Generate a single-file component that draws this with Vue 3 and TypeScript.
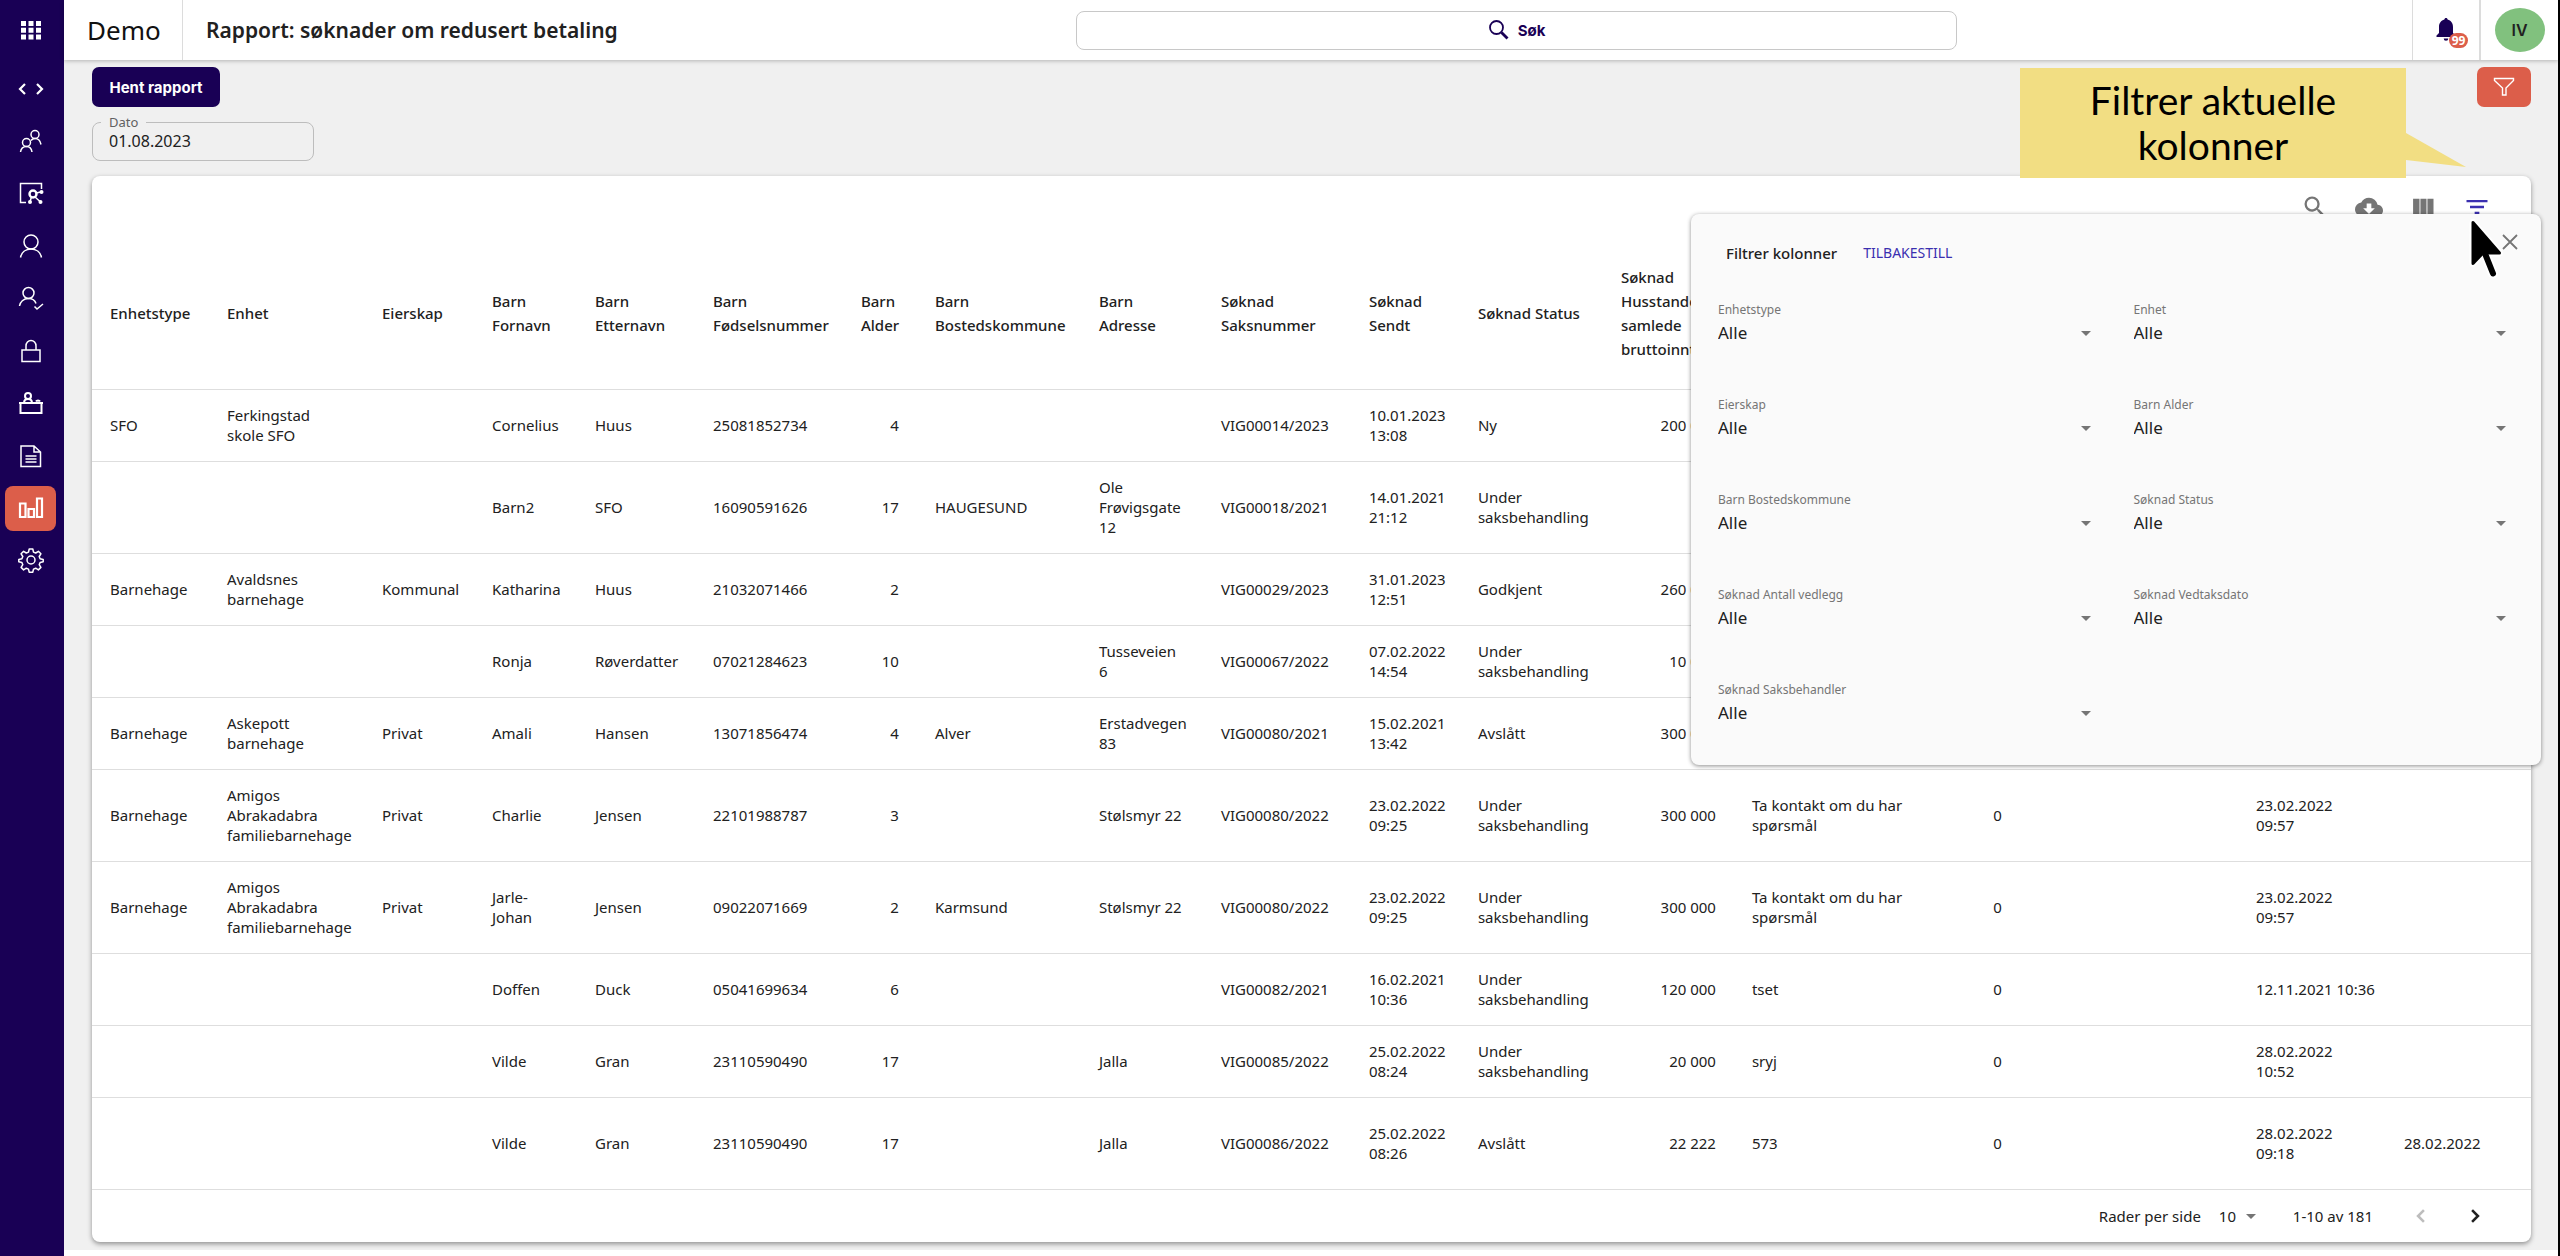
<script setup lang="ts">
import { ref } from 'vue'

interface Column {
  title: string
  width: number
  right?: boolean
}

const columns: Column[] = [
  { title: 'Enhetstype', width: 117 },
  { title: 'Enhet', width: 155 },
  { title: 'Eierskap', width: 110 },
  { title: 'Barn\nFornavn', width: 103 },
  { title: 'Barn\nEtternavn', width: 118 },
  { title: 'Barn\nFødselsnummer', width: 148 },
  { title: 'Barn\nAlder', width: 74, right: true },
  { title: 'Barn\nBostedskommune', width: 164 },
  { title: 'Barn\nAdresse', width: 122 },
  { title: 'Søknad\nSaksnummer', width: 148 },
  { title: 'Søknad\nSendt', width: 109 },
  { title: 'Søknad Status', width: 143 },
  { title: 'Søknad\nHusstandens\nsamlede\nbruttoinntekt', width: 131, right: true },
  { title: '', width: 186 },
  { title: '', width: 100, right: true },
  { title: '', width: 218 },
  { title: '', width: 148 },
  { title: '', width: 145 },
]
const totalWidth = columns.reduce((sum, c) => sum + c.width, 0)
const share = (c: Column) => ({ width: `${(c.width / totalWidth) * 100}%` })

const under = 'Under\nsaksbehandling'
const amigos = 'Amigos\nAbrakadabra\nfamiliebarnehage'
const kontakt = 'Ta kontakt om du har\nspørsmål'

const rows: { tall?: boolean; cells: string[] }[] = [
  { cells: ['SFO', 'Ferkingstad\nskole SFO', '', 'Cornelius', 'Huus', '25081852734', '4', '', '', 'VIG00014/2023', '10.01.2023\n13:08', 'Ny', '200 000', '', '', '', '', ''] },
  { tall: true, cells: ['', '', '', 'Barn2', 'SFO', '16090591626', '17', 'HAUGESUND', 'Ole\nFrøvigsgate\n12', 'VIG00018/2021', '14.01.2021\n21:12', under, '', '', '', '', '', ''] },
  { cells: ['Barnehage', 'Avaldsnes\nbarnehage', 'Kommunal', 'Katharina', 'Huus', '21032071466', '2', '', '', 'VIG00029/2023', '31.01.2023\n12:51', 'Godkjent', '260 000', '', '', '', '', ''] },
  { cells: ['', '', '', 'Ronja', 'Røverdatter', '07021284623', '10', '', 'Tusseveien\n6', 'VIG00067/2022', '07.02.2022\n14:54', under, '10 000', '', '', '', '', ''] },
  { cells: ['Barnehage', 'Askepott\nbarnehage', 'Privat', 'Amali', 'Hansen', '13071856474', '4', 'Alver', 'Erstadvegen\n83', 'VIG00080/2021', '15.02.2021\n13:42', 'Avslått', '300 000', '', '', '', '', ''] },
  { tall: true, cells: ['Barnehage', amigos, 'Privat', 'Charlie', 'Jensen', '22101988787', '3', '', 'Stølsmyr 22', 'VIG00080/2022', '23.02.2022\n09:25', under, '300 000', kontakt, '0', '', '23.02.2022\n09:57', ''] },
  { tall: true, cells: ['Barnehage', amigos, 'Privat', 'Jarle-\nJohan', 'Jensen', '09022071669', '2', 'Karmsund', 'Stølsmyr 22', 'VIG00080/2022', '23.02.2022\n09:25', under, '300 000', kontakt, '0', '', '23.02.2022\n09:57', ''] },
  { cells: ['', '', '', 'Doffen', 'Duck', '05041699634', '6', '', '', 'VIG00082/2021', '16.02.2021\n10:36', under, '120 000', 'tset', '0', '', '12.11.2021 10:36', ''] },
  { cells: ['', '', '', 'Vilde', 'Gran', '23110590490', '17', '', 'Jalla', 'VIG00085/2022', '25.02.2022\n08:24', under, '20 000', 'sryj', '0', '', '28.02.2022\n10:52', ''] },
  { tall: true, cells: ['', '', '', 'Vilde', 'Gran', '23110590490', '17', '', 'Jalla', 'VIG00086/2022', '25.02.2022\n08:26', 'Avslått', '22 222', '573', '0', '', '28.02.2022\n09:18', '28.02.2022'] },
]

const filters = [
  'Enhetstype', 'Enhet', 'Eierskap', 'Barn Alder', 'Barn Bostedskommune',
  'Søknad Status', 'Søknad Antall vedlegg', 'Søknad Vedtaksdato', 'Søknad Saksbehandler',
]

const dato = ref('01.08.2023')
</script>

<template>
  <div class="app">
    <nav class="side" aria-label="Hovedmeny">
      <a href="#" aria-label="Apper">
        <svg width="22" height="22" viewBox="0 0 22 22" fill="#fff">
          <path d="M1 2h5v5H1zM8.500 2h5v5h-5zM16 2h5v5h-5zM1 8.700h5v5H1zM8.500 8.700h5v5h-5zM16 8.700h5v5h-5zM1 15.400h5v5H1zM8.500 15.400h5v5h-5zM16 15.400h5v5h-5z" />
        </svg>
      </a>
      <div class="menu">
        <a href="#" aria-label="Utvikler">
          <svg class="ln bold" viewBox="0 0 26 26"><path d="M7 8l-5 5 5 5M19 8l5 5-5 5" /></svg>
        </a>
        <a href="#" aria-label="Familier">
          <svg class="ln" viewBox="0 0 26 26">
            <circle cx="17" cy="6.500" r="4" /><path d="M13 12.500c1-1.500 2.300-2 4-2 3.200 0 5.300 2.300 6 6" />
            <circle cx="8.500" cy="14.500" r="4" /><path d="M2.500 24c.5-3.500 3-5.500 6-5.500s5 2 5.500 5.500" />
          </svg>
        </a>
        <a href="#" aria-label="Nettverk">
          <svg class="ln" viewBox="0 0 26 26">
            <path d="M8 22.500H2.500v-19h21V9" />
            <circle cx="15" cy="14" r="3.500" stroke-width="2.400" />
            <path d="M18 13l5-1M13.500 17l-1.500 4.500M17 17l5 4.500" />
            <g fill="#fff" stroke="none"><circle cx="23.500" cy="12" r="2" /><circle cx="12" cy="22" r="2" /><circle cx="22.500" cy="22" r="2" /></g>
          </svg>
        </a>
        <a href="#" aria-label="Personer">
          <svg class="ln" viewBox="0 0 26 26"><circle cx="13" cy="9" r="7" /><path d="M2.500 24.500C3.500 19.500 7.500 16 13 16s9.500 3.500 10.500 8.500" /></svg>
        </a>
        <a href="#" aria-label="Godkjenning">
          <svg class="ln" viewBox="0 0 26 26"><circle cx="10.500" cy="8" r="5.500" /><path d="M1.500 21c.5-4 4-7.500 9-7.500 4 0 6.500 2 7.500 5M16.500 21.500l2.500 2.500 6-5" /></svg>
        </a>
        <a href="#" aria-label="Tilgang">
          <svg class="ln" viewBox="0 0 26 26"><path d="M4 12h18v11.500H4zM8 12V8a5 5.500 0 0 1 10 0v4" /></svg>
        </a>
        <a href="#" aria-label="Saksbehandling">
          <svg class="ln" viewBox="0 0 26 26"><g stroke-width="2"><circle cx="10" cy="6" r="3" /><path d="M6 12c.3-2 2-3 4-3s3.700 1 4 3M18 11.500c.8-1.500 3.200-1.500 4 0M1 13h24M2.500 13v10h21V13" /></g></svg>
        </a>
        <a href="#" aria-label="Dokumenter">
          <svg class="ln" viewBox="0 0 26 26"><path d="M3 3h13l6.500 6v14.500H3zM16 3v6h6.500M7.500 13h11M7.500 16h11M7.500 19h11" /></svg>
        </a>
        <a href="#" class="active" aria-label="Rapporter" aria-current="page">
          <svg class="ln bold" viewBox="0 0 26 26"><path d="M2 8.500h5.500V22H2zM10.500 14H16v8h-5.500zM19 3.500h5V22h-5z" /></svg>
        </a>
        <a href="#" aria-label="Innstillinger">
          <svg class="ln" viewBox="0 0 26 26">
            <circle cx="13" cy="13" r="4" />
            <path d="M11.200 2h3.600l.7 3.100 2.200.9 2.700-1.700 2.500 2.500-1.700 2.700.9 2.200 3.100.7v2.400l-3.100.7-.9 2.200 1.700 2.700-2.500 2.500-2.700-1.700-2.200.9-.7 3.100h-3.600l-.7-3.100-2.200-.9-2.700 1.700-2.500-2.500 1.700-2.700-.9-2.200-3.100-.7v-2.400l3.100-.7.9-2.200-1.700-2.700 2.500-2.500L8.300 6l2.200-.9z" stroke-linejoin="round" />
          </svg>
        </a>
      </div>
    </nav>

    <div class="page">
      <header class="top">
        <div class="brand">Demo</div>
        <h1>Rapport: søknader om redusert betaling</h1>
        <button type="button" class="search">
          <svg width="22" height="22" viewBox="0 0 22 22" fill="none" stroke="currentColor"><circle cx="8.500" cy="8.500" r="6.500" stroke-width="1.800" /><path d="M13.500 13.500l6 6" stroke-width="2.800" /></svg>
          Søk
        </button>
        <button type="button" class="bell" aria-label="Varsler">
          <svg width="22" height="26" viewBox="0 0 22 26" fill="#190055"><path d="M11 1c.9 0 1.600.7 1.600 1.600C16 3.500 18 6.300 18 10v6l2.500 2.500V20h-19v-1.500L4 16v-6c0-3.700 2-6.500 5.400-7.400C9.400 1.700 10.100 1 11 1zM8.700 21.500h4.600a2.300 2.300 0 0 1-4.600 0z" /></svg>
          <span class="badge">99</span>
        </button>
        <div class="user"><button type="button" class="avatar">IV</button></div>
      </header>

      <main class="content">
        <div class="actions">
          <button type="button" class="fetch">Hent rapport</button>
          <button type="button" class="funnel" aria-label="Filter">
            <svg width="22" height="20" viewBox="0 0 22 20" fill="none" stroke="#fff" stroke-width="1.400"><path d="M1.500 1.500h19v2L13 11v7H9.500v-7L1.500 3.500z" /></svg>
          </button>
        </div>

        <fieldset class="date">
          <legend><label for="dato">Dato</label></legend>
          <input id="dato" v-model="dato" type="text" />
        </fieldset>

        <section class="card">
          <div class="tools">
            <button type="button" aria-label="Søk i tabell"><svg viewBox="0 0 24 24"><path d="M15.500 14h-.79l-.28-.27A6.470 6.470 0 0 0 16 9.500 6.500 6.500 0 1 0 9.500 16c1.610 0 3.090-.59 4.230-1.570l.27.28v.79l5 4.990L20.490 19l-4.990-5zm-6 0C7.010 14 5 11.990 5 9.500S7.010 5 9.500 5 14 7.010 14 9.500 11.990 14 9.500 14z" /></svg></button>
            <button type="button" aria-label="Last ned"><svg viewBox="0 0 24 24"><path d="M19.350 10.040A7.490 7.490 0 0 0 12 4C9.110 4 6.600 5.640 5.350 8.040A5.994 5.994 0 0 0 0 14c0 3.310 2.690 6 6 6h13c2.760 0 5-2.240 5-5 0-2.640-2.050-4.780-4.650-4.960zM17 13l-5 5-5-5h3V9h4v4h3z" /></svg></button>
            <button type="button" aria-label="Kolonner"><svg viewBox="0 0 24 24"><path d="M3.500 5H9v14H3.500zM9.800 5h5.200v14H9.800zM15.800 5H21v14h-5.200z" /></svg></button>
            <button type="button" class="on" aria-label="Filtrer kolonner"><svg viewBox="0 0 24 24"><path d="M10 18h4v-2h-4v2zM3 6v2h18V6H3zm3 7h12v-2H6v2z" /></svg></button>
          </div>

          <table>
            <colgroup><col v-for="(c, i) in columns" :key="i" :style="share(c)" /></colgroup>
            <thead>
              <tr><th v-for="(c, i) in columns" :key="i" scope="col" :class="{ numhead: c.right }"><span>{{ c.title }}</span></th></tr>
            </thead>
            <tbody>
              <tr v-for="(row, i) in rows" :key="i" :class="{ tall: row.tall }">
                <td v-for="(cell, j) in row.cells" :key="j" :class="{ num: columns[j].right }">{{ cell }}</td>
              </tr>
            </tbody>
          </table>

          <footer class="pager">
            <label for="size">Rader per side</label>
            <span class="select size">
              <select id="size"><option>10</option></select>
              <svg viewBox="0 0 24 24"><path d="M7 10l5 5 5-5z" /></svg>
            </span>
            <span class="range">1-10 av 181</span>
            <button type="button" disabled aria-label="Forrige side"><svg viewBox="0 0 24 24"><path d="M14.500 7l-5 5 5 5" /></svg></button>
            <button type="button" aria-label="Neste side"><svg viewBox="0 0 24 24"><path d="M9.500 7l5 5-5 5" /></svg></button>
          </footer>

          <aside class="panel">
            <button type="button" class="close" aria-label="Lukk"><svg width="16" height="16" viewBox="0 0 16 16"><path d="M1 1l14 14M15 1L1 15" stroke="#757575" stroke-width="1.800" /></svg></button>
            <div class="phead">
              <h2>Filtrer kolonner</h2>
              <button type="button">TILBAKESTILL</button>
            </div>
            <div class="filters">
              <div v-for="(f, i) in filters" :key="f" class="filter">
                <label :for="`filter-${i}`">{{ f }}</label>
                <span class="select">
                  <select :id="`filter-${i}`"><option>Alle</option></select>
                  <svg viewBox="0 0 24 24"><path d="M7 10l5 5 5-5z" /></svg>
                </span>
              </div>
            </div>
            <svg class="cursor" width="40" height="64" viewBox="0 0 40 64">
              <path d="M6 5.500v41l10-10.500h16.500z" fill="#fff" stroke="#fff" stroke-width="7" stroke-linejoin="round" />
              <path d="M17 34l9 22.500" stroke="#fff" stroke-width="10" stroke-linecap="round" />
              <path d="M6 5.500v41l10-10.500h16.500z" fill="#000" stroke="#000" stroke-width="3" stroke-linejoin="round" />
              <path d="M17 34l9 22.500" stroke="#000" stroke-width="6" stroke-linecap="round" />
            </svg>
          </aside>

          <div class="callout">
            Filtrer aktuelle<br />kolonner
            <svg width="60" height="34" viewBox="0 0 60 34"><path d="M0 0l60 34L0 27z" fill="#f2de83" /></svg>
          </div>
        </section>
      </main>
    </div>
  </div>
</template>

<style>
body {
  background: #fff;
}
</style>

<style scoped>
.app {
  display: flex;
  min-height: 100vh;
  box-sizing: border-box;
  border-right: 2px solid #000;
  font-family: 'Noto Sans', sans-serif;
  font-size: 15px;
  line-height: 20px;
  color: #212121;
}
.app *,
.app *::before {
  box-sizing: border-box;
}
button {
  border: 0;
  padding: 0;
  margin: 0;
  background: none;
  font: inherit;
  color: inherit;
}

.side {
  flex: none;
  width: 64px;
  padding: 7px 8px 0 5px;
  background: #190055;
}
.side a {
  display: flex;
  align-items: center;
  justify-content: center;
  height: 45px;
  border-radius: 8px;
}
.menu {
  display: flex;
  flex-direction: column;
  justify-content: space-between;
  height: 517px;
  margin-top: 14px;
}
.side .active {
  background: #dc5e4a;
}
.ln {
  width: 26px;
  height: 26px;
  fill: none;
  stroke: #fff;
  stroke-width: 1.500;
}
.ln.bold {
  stroke-width: 2.200;
}

.page {
  flex: 1;
  min-width: 0;
}
.top {
  position: relative;
  display: grid;
  grid-template-columns: 119px 893fr 881fr 455fr 67px 79px;
  align-items: center;
  height: 60px;
  background: #fff;
  box-shadow: 0 1px 4px rgba(0, 0, 0, 0.25);
}
.brand {
  display: flex;
  align-items: center;
  height: 60px;
  padding-left: 23px;
  border-right: 1px solid #dcdcdc;
  font-size: 26px;
  color: #111;
}
h1 {
  margin: 0;
  padding-left: 23px;
  font-size: 21px;
  line-height: 28px;
  font-weight: 600;
}
.search {
  display: flex;
  align-items: center;
  justify-content: center;
  gap: 8px;
  height: 39px;
  border: 1px solid #c8c8c8;
  border-radius: 8px;
  font: 700 15px Inter, sans-serif;
  color: #190055;
}
.bell {
  position: relative;
  grid-column: 5;
  height: 60px;
  border-left: 1px solid #dcdcdc;
}
.bell svg {
  display: block;
  margin: 0 auto;
}
.badge {
  position: absolute;
  left: 36px;
  top: 33px;
  width: 19px;
  height: 15px;
  border-radius: 8px;
  background: #dc5e4a;
  color: #fff;
  font-size: 12px;
  font-weight: 700;
  line-height: 15px;
}
.user {
  display: flex;
  align-items: center;
  justify-content: center;
  height: 60px;
  border-left: 2px solid #dcdcdc;
}
.avatar {
  width: 50px;
  height: 44px;
  border-radius: 50%;
  background: #81c17e;
  font: 600 16px Inter, sans-serif;
}

.content {
  padding: 7px 27px 8px 28px;
  background: #f0f0f0;
}
.actions {
  display: flex;
  justify-content: space-between;
}
.fetch {
  width: 128px;
  height: 40px;
  border-radius: 7px;
  background: #190055;
  color: #fff;
  font: 700 15px Inter, sans-serif;
}
.funnel {
  display: flex;
  align-items: center;
  justify-content: center;
  width: 54px;
  height: 40px;
  border-radius: 7px;
  background: #dc5e4a;
}
.date {
  width: 222px;
  height: 47px;
  margin: 7px 0 15px;
  padding: 0 8px;
  border: 1px solid #bdbdbd;
  border-radius: 8px;
}
.date legend {
  padding: 0 8px;
  font-size: 13px;
  line-height: 16px;
  color: #616161;
}
.date input {
  display: block;
  width: 100%;
  height: 22px;
  padding: 0 8px;
  border: 0;
  background: none;
  font: inherit;
  font-size: 16px;
  color: inherit;
}

.card {
  position: relative;
  border-radius: 8px;
  background: #fff;
  box-shadow: 0 2px 5px rgba(0, 0, 0, 0.4);
}
.tools {
  display: flex;
  justify-content: flex-end;
  gap: 26px;
  height: 62px;
  padding: 17px 40px 0 0;
}
.tools button {
  width: 28px;
  height: 28px;
}
.tools svg {
  display: block;
  width: 28px;
  height: 28px;
  fill: #757575;
}
.tools .on svg {
  fill: #3a2fb0;
}

table {
  width: 100%;
  table-layout: fixed;
  border-collapse: separate;
  border-spacing: 0;
}
th,
td {
  padding: 0 18px 2px;
  border-bottom: 1px solid #dedede;
  text-align: left;
  white-space: pre;
}
th {
  height: 152px;
  font-weight: 500;
  line-height: 24px;
}
th.numhead {
  text-align: right;
}
th.numhead span {
  display: inline-block;
  text-align: left;
}
td {
  height: 72px;
}
.tall td {
  height: 92px;
}
td.num {
  text-align: right;
}

.select {
  position: relative;
  display: block;
}
.select select {
  display: block;
  width: 100%;
  height: 24px;
  padding: 0 24px 0 0;
  border: 0;
  appearance: none;
  background: none;
  font: inherit;
  color: inherit;
}
.select svg {
  position: absolute;
  right: 0;
  top: 0;
  width: 24px;
  height: 24px;
  fill: #757575;
  pointer-events: none;
}
.pager {
  display: flex;
  align-items: center;
  justify-content: flex-end;
  height: 52px;
  padding-right: 42px;
}
.size {
  width: 44px;
  margin: 0 30px 0 18px;
}
.range {
  margin-right: 34px;
}
.pager button {
  width: 28px;
  height: 28px;
  margin-left: 26px;
}
.range + button {
  margin-left: 0;
}
.pager button svg {
  display: block;
  fill: none;
  stroke: #212121;
  stroke-width: 2.200;
}
.pager button:disabled svg {
  stroke: #bdbdbd;
}

.panel {
  position: absolute;
  top: 38px;
  right: -10px;
  width: 850px;
  height: 551px;
  padding: 26px 28px 0 27px;
  border-radius: 8px;
  background: #fafafa;
  box-shadow: 0 1px 4px rgba(0, 0, 0, 0.45);
}
.close {
  position: absolute;
  right: 22px;
  top: 20px;
  width: 18px;
  height: 18px;
}
.phead {
  display: flex;
  align-items: center;
  gap: 26px;
  height: 26px;
  padding-left: 8px;
}
h2 {
  margin: 0;
  font-size: 15px;
  line-height: 20px;
  font-weight: 500;
}
.phead button {
  font-size: 14px;
  color: #3a2fb0;
}
.filters {
  display: grid;
  grid-template-columns: 1fr 1fr;
  column-gap: 36px;
  padding-top: 36px;
}
.filter {
  height: 95px;
}
.filter label {
  display: block;
  margin-bottom: 3px;
  font-size: 12px;
  line-height: 16px;
  color: #757575;
}
.filter .select {
  font-size: 17px;
}
.cursor {
  position: absolute;
  left: 776px;
  top: 3px;
}
.callout {
  position: absolute;
  top: -108px;
  right: 125px;
  width: 386px;
  height: 110px;
  padding-top: 10px;
  background: #f2de83;
  font: 39px/45px Lato, sans-serif;
  text-align: center;
  color: #000;
}
.callout svg {
  position: absolute;
  left: 100%;
  top: 65px;
}
</style>
